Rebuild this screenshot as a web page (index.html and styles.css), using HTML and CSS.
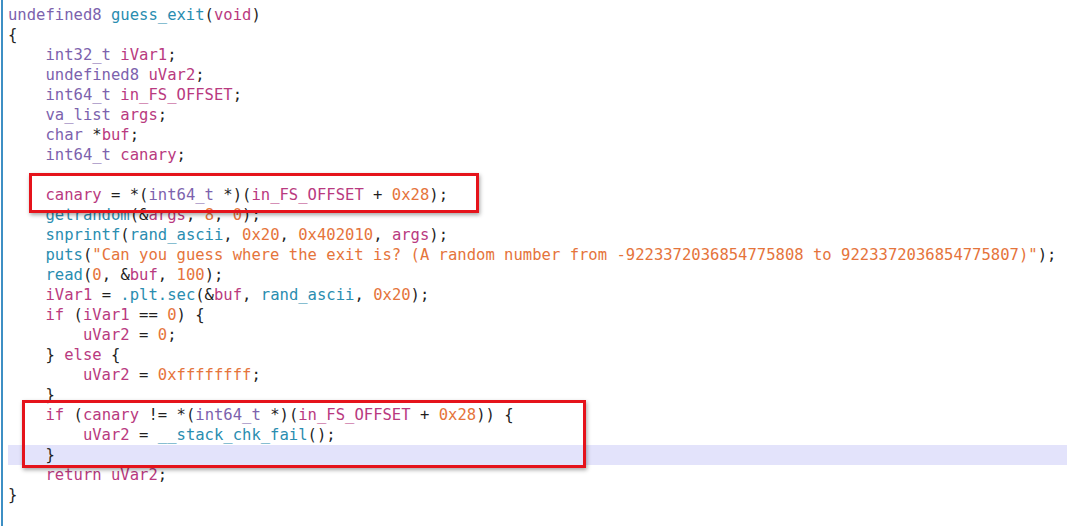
FILE: index.html
```html
<!DOCTYPE html>
<html>
<head>
<meta charset="utf-8">
<link rel="stylesheet" href="styles.css">
</head>
<body>
<div class="panel">
  <div class="code">
    <div class="ln"><span class="t">undefined8</span> <span class="f">guess_exit</span>(<span class="v">void</span>)</div>
    <div class="ln">{</div>
    <div class="ln">    <span class="t">int32_t</span> <span class="v">iVar1</span>;</div>
    <div class="ln">    <span class="t">undefined8</span> <span class="v">uVar2</span>;</div>
    <div class="ln">    <span class="t">int64_t</span> <span class="v">in_FS_OFFSET</span>;</div>
    <div class="ln">    <span class="t">va_list</span> <span class="v">args</span>;</div>
    <div class="ln">    <span class="t">char</span> *<span class="v">buf</span>;</div>
    <div class="ln">    <span class="t">int64_t</span> <span class="v">canary</span>;</div>
    <div class="ln"> </div>
    <div class="ln">    <span class="v">canary</span> = *(<span class="t">int64_t</span> *)(<span class="v">in_FS_OFFSET</span> + <span class="c">0x28</span>);</div>
    <div class="ln">    <span class="f">getrandom</span>(&amp;<span class="v">args</span>, <span class="c">8</span>, <span class="c">0</span>);</div>
    <div class="ln">    <span class="f">snprintf</span>(<span class="f">rand_ascii</span>, <span class="c">0x20</span>, <span class="c">0x402010</span>, <span class="v">args</span>);</div>
    <div class="ln">    <span class="f">puts</span>(<span class="c">"Can you guess where the exit is? (A random number from -9223372036854775808 to 9223372036854775807)"</span>);</div>
    <div class="ln">    <span class="f">read</span>(<span class="c">0</span>, &amp;<span class="v">buf</span>, <span class="c">100</span>);</div>
    <div class="ln">    <span class="v">iVar1</span> = <span class="f">.plt.sec</span>(&amp;<span class="v">buf</span>, <span class="f">rand_ascii</span>, <span class="c">0x20</span>);</div>
    <div class="ln">    <span class="v">if</span> (<span class="v">iVar1</span> == <span class="c">0</span>) {</div>
    <div class="ln">        <span class="v">uVar2</span> = <span class="c">0</span>;</div>
    <div class="ln">    } <span class="v">else</span> {</div>
    <div class="ln">        <span class="v">uVar2</span> = <span class="c">0xffffffff</span>;</div>
    <div class="ln">    }</div>
    <div class="ln">    <span class="v">if</span> (<span class="v">canary</span> != *(<span class="t">int64_t</span> *)(<span class="v">in_FS_OFFSET</span> + <span class="c">0x28</span>)) {</div>
    <div class="ln">        <span class="v">uVar2</span> = <span class="f">__stack_chk_fail</span>();</div>
    <div class="ln hl">    }</div>
    <div class="ln">    <span class="v">return</span> <span class="v">uVar2</span>;</div>
    <div class="ln">}</div>
    <div class="mark mark-a"></div>
    <div class="mark mark-b"></div>
  </div>
</div>
</body>
</html>
```

FILE: styles.css
```css
html, body {
  margin: 0;
  padding: 0;
  background: #ffffff;
}

body {
  width: 1067px;
  height: 526px;
  overflow: hidden;
  padding-left: 1px;
  box-sizing: border-box;
}

.panel {
  height: 526px;
  border-left: 2px solid #3d8fc4;
  padding-left: 5px;
  padding-top: 5px;
  box-sizing: border-box;
}

.code {
  position: relative;
  font-family: "DejaVu Sans Mono", "Liberation Mono", monospace;
  font-size: 15.55px;
  line-height: 20px;
  color: #1f1f1f;
}

.ln {
  height: 20px;
  white-space: pre;
}

.hl {
  background: #e3e3fb;
}

.t { color: #7c62ad; }
.v { color: #b93a80; }
.f { color: #2a8db0; }
.c { color: #e5743b; }

.mark {
  position: absolute;
  border: 3.5px solid #e5131b;
  box-shadow: 1px 2px 4px rgba(0, 0, 0, 0.35);
  box-sizing: border-box;
}

.mark-a {
  left: 21px;
  top: 168px;
  width: 450px;
  height: 40px;
}

.mark-b {
  left: 14px;
  top: 395px;
  width: 564px;
  height: 68px;
}
```
